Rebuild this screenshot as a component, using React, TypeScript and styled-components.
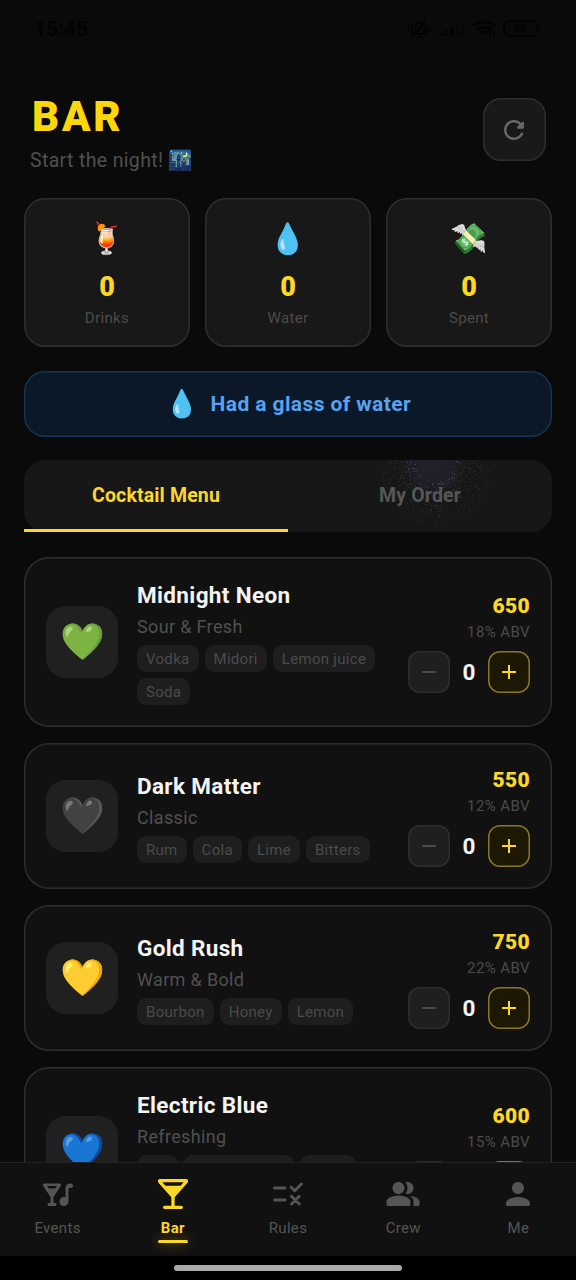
import React from "react";
import styled, { createGlobalStyle, css } from "styled-components";

const GlobalStyle = createGlobalStyle`
  *, *::before, *::after { box-sizing: border-box; }
  body { margin: 0; background: #0a0a0a; }
  button { font: inherit; letter-spacing: inherit; color: inherit; border: 0; padding: 0; margin: 0; background: none; }
`;

const gold = "#fdd726";
const dim = "#4b4b4b";
const line = "#2e2e2e";

const Screen = styled.div`
  height: 1280px;
  display: flex;
  flex-direction: column;
  overflow: hidden;
  background: #0a0a0a;
  color: #f4f4f4;
  font-family: Roboto, "Noto Color Emoji", sans-serif;
`;

const StatusBar = styled.div`
  height: 57px;
  flex: none;
  display: flex;
  justify-content: space-between;
  align-items: center;
  padding: 0 37px 0 34px;
  color: #030303;
  font-size: 21px;
  font-weight: 700;
`;

const StatusIcons = styled.svg`
  display: block;
  margin-right: -2px;
`;

const Scroll = styled.main`
  flex: 1;
  min-height: 0;
  overflow: hidden;
  padding: 34px 24px 0;
`;

const Header = styled.header`
  display: flex;
  justify-content: space-between;
  align-items: flex-start;
  padding: 0 6px;
  margin-bottom: 25px;
`;

const Title = styled.h1`
  margin: 0 0 7px 2px;
  padding-top: 1px;
  font-size: 42px;
  line-height: 50px;
  font-weight: 900;
  letter-spacing: 2.8px;
  color: #ffd60a;
`;

const Subtitle = styled.p`
  margin: 0;
  font-size: 19.5px;
  line-height: 24px;
  letter-spacing: 0.35px;
  color: #505050;
  white-space: nowrap;
`;

const RefreshButton = styled.button`
  width: 63px;
  height: 63px;
  margin-top: 7px;
  padding-right: 1px;
  border-radius: 18px;
  background: #191919;
  box-shadow: inset 0 0 0 1.5px ${line};
  display: grid;
  place-items: center;
  color: #686868;
`;

const Stats = styled.section`
  display: grid;
  grid-template-columns: repeat(3, 1fr);
  gap: 15px;
  margin-bottom: 24px;
`;

const StatCard = styled.div`
  height: 149px;
  border-radius: 21px;
  background: #181818;
  box-shadow: inset 0 0 0 1.5px ${line};
  display: flex;
  flex-direction: column;
  align-items: center;
  padding-top: 21px;
`;

const StatEmoji = styled.span`
  font-size: 30px;
  line-height: 40px;
`;

const StatValue = styled.strong`
  margin-top: 12px;
  font-size: 27px;
  line-height: 32px;
  font-weight: 900;
  color: ${gold};
`;

const StatLabel = styled.span`
  margin-top: 6px;
  font-size: 15px;
  line-height: 18px;
  letter-spacing: 0.35px;
  color: ${dim};
`;

const WaterButton = styled.button`
  width: 100%;
  height: 66px;
  margin-bottom: 23px;
  border-radius: 21px;
  background: #0a1828;
  box-shadow: inset 0 0 0 1.5px #163450;
  display: flex;
  justify-content: center;
  align-items: center;
  gap: 12px;
  font-size: 21px;
  font-weight: 700;
  letter-spacing: 0.4px;
  color: #57a2f2;
`;

const WaterEmoji = styled.span`
  font-size: 27px;
  letter-spacing: 0;
`;

const Tabs = styled.div`
  position: relative;
  height: 72px;
  margin-bottom: 25px;
  display: grid;
  grid-template-columns: 1fr 1fr;
  border-radius: 21px;
  background: #171717;
`;

const Tab = styled.button<{ $active?: boolean }>`
  position: relative;
  padding-bottom: 2px;
  font-size: 19.5px;
  font-weight: 700;
  letter-spacing: 0.15px;
  color: ${(p) => (p.$active ? gold : "#565656")};
  ${(p) => p.$active && css`box-shadow: inset 0 -3px 0 ${gold};`}
`;

const Splash = styled.svg`
  position: absolute;
  top: 0;
  right: 48px;
`;

const Menu = styled.section`
  display: flex;
  flex-direction: column;
  gap: 16px;
`;

const DrinkIcon = styled.div`
  width: 72px;
  height: 72px;
  flex: none;
  display: grid;
  place-items: center;
  padding-left: 2px;
  border-radius: 20px;
  background: #202020;
  font-size: 36px;
  line-height: 1;
`;

const DrinkInfo = styled.div`
  width: 253px;
  margin-left: 19px;
  flex: none;
`;

const DrinkCard = styled.article<{ $tall?: boolean }>`
  height: ${(p) => (p.$tall ? 170 : 146)}px;
  flex: none;
  display: flex;
  align-items: center;
  padding: 0 22px;
  border-radius: 25px;
  background: #111111;
  box-shadow: inset 0 0 0 1.5px ${line};

  ${DrinkInfo} {
    padding-top: ${(p) => (p.$tall ? 2 : 4)}px;
  }
`;

const DrinkName = styled.h2`
  margin: 0;
  font-size: 22.5px;
  line-height: 27px;
  font-weight: 700;
  letter-spacing: 0.35px;
`;

const DrinkStyle = styled.p`
  margin: 7px 0 7px;
  font-size: 18px;
  line-height: 22px;
  letter-spacing: 0.35px;
  color: #505050;
`;

const Chips = styled.div`
  display: flex;
  flex-wrap: wrap;
  gap: 6px;
`;

const Chip = styled.span`
  height: 27px;
  padding: 0 9px;
  border-radius: 9px;
  background: #1e1e1e;
  font-size: 15px;
  line-height: 28px;
  letter-spacing: 0.3px;
  color: ${dim};
`;

const Order = styled.div`
  flex: 1;
  padding-top: 2px;
  display: flex;
  flex-direction: column;
  align-items: flex-end;
`;

const Price = styled.strong`
  font-size: 21px;
  line-height: 25px;
  font-weight: 900;
  letter-spacing: 0.3px;
  color: ${gold};
`;

const Abv = styled.span`
  margin: 4px 0 9px;
  font-size: 15px;
  line-height: 19px;
  letter-spacing: 0.4px;
  color: ${dim};
  white-space: nowrap;
`;

const Stepper = styled.div`
  display: flex;
  align-items: center;
`;

const Step = styled.button<{ $plus?: boolean }>`
  width: 42px;
  height: 42px;
  border-radius: 12px;
  display: grid;
  place-items: center;
  color: ${(p) => (p.$plus ? gold : "#4d4d4d")};
  background: ${(p) => (p.$plus ? "#1c1804" : "#1f1f1f")};
  box-shadow: inset 0 0 0 1.5px ${(p) => (p.$plus ? "#8a7620" : line)};
`;

const Count = styled.span`
  width: 38px;
  text-align: center;
  font-size: 22.5px;
  font-weight: 700;
`;

const Nav = styled.nav`
  height: 94px;
  flex: none;
  display: grid;
  grid-template-columns: repeat(5, 1fr);
  background: #111111;
  box-shadow: inset 0 1px 0 #222222;
`;

const NavItem = styled.a<{ $active?: boolean }>`
  display: flex;
  flex-direction: column;
  align-items: center;
  padding-top: 14px;
  font-size: 15px;
  line-height: 18px;
  letter-spacing: 0.3px;
  font-weight: ${(p) => (p.$active ? 700 : 400)};
  color: ${(p) => (p.$active ? gold : "#555555")};
`;

const NavIcon = styled.span`
  height: 36px;
  display: flex;
  align-items: center;
  justify-content: center;
  margin-bottom: 7px;
`;

const NavMarker = styled.span`
  width: 30px;
  height: 3px;
  margin-top: 3px;
  border-radius: 2px;
  background: ${gold};
  box-shadow: 0 0 12px rgba(255, 214, 10, 0.55);
`;

const HomeArea = styled.footer`
  height: 24px;
  flex: none;
  display: flex;
  justify-content: center;
  padding-top: 9px;
  background: #000000;
`;

const HomeBar = styled.span`
  width: 228px;
  height: 6px;
  border-radius: 3px;
  background: #aaaaaa;
`;

const specks = (() => {
  let seed = 41;
  const next = () => {
    seed = (seed * 16807) % 2147483647;
    return seed / 2147483647;
  };
  return Array.from({ length: 620 }, () => {
    const radius = 19 + 42 * Math.pow(next(), 0.8);
    const angle = next() * Math.PI;
    return {
      x: Math.round(70 + Math.cos(angle) * radius),
      y: Math.round(Math.sin(angle) * (radius + 3)),
      o: (0.1 + next() * 0.42) * (1 - radius / 78),
    };
  });
})();

const TouchSplash = () => (
  <Splash width="140" height="72" viewBox="0 0 140 72">
    <defs>
      <radialGradient id="splash" gradientUnits="userSpaceOnUse" cx="70" cy="6" r="34">
        <stop offset="0" stopColor="#4a4480" stopOpacity="0.2" />
        <stop offset="0.5" stopColor="#4a4480" stopOpacity="0.17" />
        <stop offset="1" stopColor="#4a4480" stopOpacity="0" />
      </radialGradient>
    </defs>
    <rect width="140" height="72" fill="url(#splash)" />
    {specks.map((s, i) => (
      <rect key={i} x={s.x} y={s.y} width="1" height="1" fill="#8c8a9c" opacity={s.o} />
    ))}
  </Splash>
);

const icons: Record<string, React.ReactNode> = {
  Events: (
    <svg width="36" height="36" viewBox="0 0 24 24" fill="currentColor">
      <path d="M2.87 5h10.26c.8 0 1.28.89.83 1.55L9 14v4h1c.55 0 1 .45 1 1s-.45 1-1 1H6c-.55 0-1-.45-1-1s.45-1 1-1h1v-4L2.04 6.55C1.59 5.89 2.07 5 2.87 5zm1.9 1.7 1.1 1.7h4.26l1.1-1.7H4.77zM17 15.17V8c0-1.66 1.34-3 3-3h.5c.83 0 1.5.67 1.5 1.5S21.33 8 20.5 8H19v9c0 1.75-1.5 3.16-3.28 2.99-1.42-.13-2.58-1.29-2.71-2.71C12.84 15.5 14.25 14 16 14c.35 0 .69.06 1 .17z" />
    </svg>
  ),
  Bar: (
    <svg width="40" height="40" viewBox="0 0 24 24" fill="currentColor">
      <path d="M21 4c0-.55-.45-1-1-1H4c-.55 0-1 .45-1 1v.59c0 .27.1.51.29.7L11 14v5H7c-.55 0-1 .45-1 1s.45 1 1 1h10c.55 0 1-.45 1-1s-.45-1-1-1h-4v-5l7.71-8.71c.19-.19.29-.43.29-.7V4zM7.43 7 5.66 5h12.69l-1.78 2H7.43z" />
    </svg>
  ),
  Rules: (
    <svg width="36" height="36" viewBox="0 0 24 24" fill="none" stroke="currentColor" strokeWidth="1.9" strokeLinecap="round" strokeLinejoin="round">
      <path d="M3 8h7M3 16h7M14.1 7.5l2.35 2.3 4.500-4.500M14.300 13.500l5.200 5.200M19.500 13.500l-5.200 5.200" />
    </svg>
  ),
  Crew: (
    <svg width="36" height="36" viewBox="0 0 24 24" fill="currentColor">
      <path fillRule="evenodd" d="M16.67 13.13C18.04 14.06 19 15.32 19 17v3h3c.55 0 1-.45 1-1v-2c0-2.18-3.57-3.47-6.33-3.87zM15 12c2.21 0 4-1.79 4-4s-1.79-4-4-4c-.47 0-.91.1-1.33.24C14.5 5.27 15 6.58 15 8s-.5 2.73-1.33 3.76c.42.14.86.24 1.33.24zM9 12c2.21 0 4-1.79 4-4s-1.79-4-4-4-4 1.79-4 4 1.79 4 4 4zM9 13c-2.67 0-8 1.34-8 4v2c0 .55.45 1 1 1h14c.55 0 1-.45 1-1v-2c0-2.66-5.33-4-8-4z" />
    </svg>
  ),
  Me: (
    <svg width="36" height="36" viewBox="0 0 24 24" fill="currentColor">
      <path d="M12 12c2.21 0 4-1.79 4-4s-1.79-4-4-4-4 1.79-4 4 1.79 4 4 4zm0 2c-2.67 0-8 1.34-8 4v1c0 .55.45 1 1 1h14c.55 0 1-.45 1-1v-1c0-2.66-5.33-4-8-4z" />
    </svg>
  ),
};

const RefreshIcon = () => (
  <svg width="30" height="30" viewBox="0 0 24 24" fill="currentColor">
    <path d="M17.65 6.35c-1.63-1.63-3.94-2.57-6.48-2.31-3.67.37-6.69 3.35-7.1 7.02C3.52 15.91 7.27 20 12 20c3.19 0 5.93-1.87 7.21-4.56.32-.67-.16-1.44-.9-1.44-.37 0-.72.2-.88.53-1.13 2.43-3.84 3.97-6.8 3.31-2.22-.49-4.01-2.3-4.48-4.52C5.31 9.44 8.26 6 12 6c1.66 0 3.14.69 4.22 1.78l-1.51 1.51c-.63.63-.19 1.71.7 1.71H19c.55 0 1-.45 1-1V6.41c0-.89-1.08-1.34-1.71-.71l-.64.65z" />
  </svg>
);

const stats = [
  ["🍹", "0", "Drinks"],
  ["💧", "0", "Water"],
  ["💸", "0", "Spent"],
];

const drinks = [
  { emoji: "💚", name: "Midnight Neon", style: "Sour & Fresh", parts: ["Vodka", "Midori", "Lemon juice", "Soda"], price: 650, abv: 18 },
  { emoji: "🖤", name: "Dark Matter", style: "Classic", parts: ["Rum", "Cola", "Lime", "Bitters"], price: 550, abv: 12 },
  { emoji: "💛", name: "Gold Rush", style: "Warm & Bold", parts: ["Bourbon", "Honey", "Lemon"], price: 750, abv: 22 },
  { emoji: "💙", name: "Electric Blue", style: "Refreshing", parts: ["Gin", "Blue Curacao", "Tonic", "Lime"], price: 600, abv: 15 },
];

export default function App() {
  return (
    <Screen>
      <GlobalStyle />
      <StatusBar>
        <span>15:45</span>
        <StatusIcons width="134" height="22" viewBox="0 0 134 22" fill="none" stroke="currentColor" strokeWidth="2">
          <path d="M2 8v6M5 6v10M22 8v6M19 6v10M7 16h11M8 16V9a4.500 4.500 0 0 1 8-2.500M17 9v7M5 19 19 2M10 19h5" />
          <path d="M34 18v-3M39 18v-6M45 18V9" strokeWidth="3" />
          <path d="M51 18V6M56 18V3" strokeWidth="3" opacity="0.4" />
          <path d="M66 8a17 17 0 0 1 22 0M70 12a11 11 0 0 1 14 0M74 15a5 5 0 0 1 6 0" strokeWidth="3" />
          <path d="M83 13v6M87 13v6" />
          <rect x="97" y="3" width="33" height="15" rx="5" />
          <path d="M132.500 8v5" />
          <text x="113.500" y="15" textAnchor="middle" fontSize="12" fontWeight="700" fill="currentColor" stroke="none">56</text>
        </StatusIcons>
      </StatusBar>

      <Scroll>
        <Header>
          <div>
            <Title>BAR</Title>
            <Subtitle>Start the night! 🌃</Subtitle>
          </div>
          <RefreshButton aria-label="Refresh">
            <RefreshIcon />
          </RefreshButton>
        </Header>

        <Stats>
          {stats.map(([emoji, value, label]) => (
            <StatCard key={label}>
              <StatEmoji>{emoji}</StatEmoji>
              <StatValue>{value}</StatValue>
              <StatLabel>{label}</StatLabel>
            </StatCard>
          ))}
        </Stats>

        <WaterButton>
          <WaterEmoji>💧</WaterEmoji>
          Had a glass of water
        </WaterButton>

        <Tabs>
          <Tab $active>Cocktail Menu</Tab>
          <Tab>My Order</Tab>
          <TouchSplash />
        </Tabs>

        <Menu>
          {drinks.map((d, i) => (
            <DrinkCard key={d.name} $tall={i === 0 || i === 3}>
              <DrinkIcon>{d.emoji}</DrinkIcon>
              <DrinkInfo>
                <DrinkName>{d.name}</DrinkName>
                <DrinkStyle>{d.style}</DrinkStyle>
                <Chips>
                  {d.parts.map((p) => (
                    <Chip key={p}>{p}</Chip>
                  ))}
                </Chips>
              </DrinkInfo>
              <Order>
                <Price>{d.price}</Price>
                <Abv>{d.abv}% ABV</Abv>
                <Stepper>
                  <Step aria-label="Remove">
                    <svg width="14" height="14" viewBox="0 0 14 14" fill="currentColor"><rect y="6" width="14" height="2" rx="1" /></svg>
                  </Step>
                  <Count>0</Count>
                  <Step $plus aria-label="Add">
                    <svg width="14" height="14" viewBox="0 0 14 14" fill="currentColor"><path d="M0 6h6V0h2v6h6v2H8v6H6V8H0z" /></svg>
                  </Step>
                </Stepper>
              </Order>
            </DrinkCard>
          ))}
        </Menu>
      </Scroll>

      <Nav>
        {Object.keys(icons).map((name) => (
          <NavItem key={name} $active={name === "Bar"}>
            <NavIcon>{icons[name]}</NavIcon>
            {name}
            {name === "Bar" && <NavMarker />}
          </NavItem>
        ))}
      </Nav>
      <HomeArea>
        <HomeBar />
      </HomeArea>
    </Screen>
  );
}
